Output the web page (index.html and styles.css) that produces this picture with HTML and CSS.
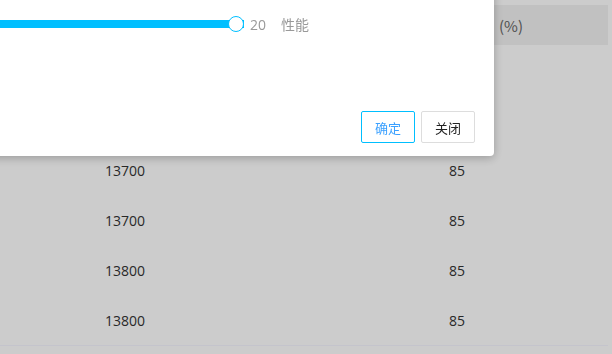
FILE: index.html
```html
<!DOCTYPE html>
<html lang="zh-CN">
<head>
    <meta charset="UTF-8">
    <meta name="viewport" content="width=device-width, initial-scale=1.0">
    <title>性能设置</title>
    <link rel="stylesheet" href="styles.css">
</head>
<body>
    <div class="table-wrap">
        <div class="table">
            <div class="row head">
                <div class="cell">设定值</div>
                <div class="cell pct">性能释放比例<span class="unit">(%)</span></div>
            </div>
            <div class="row"><div class="cell"></div><div class="cell pct"></div></div>
            <div class="row"><div class="cell"></div><div class="cell pct"></div></div>
            <div class="row"><div class="cell">13700</div><div class="cell pct">85</div></div>
            <div class="row"><div class="cell">13700</div><div class="cell pct">85</div></div>
            <div class="row"><div class="cell">13800</div><div class="cell pct">85</div></div>
            <div class="row"><div class="cell">13800</div><div class="cell pct">85</div></div>
        </div>
    </div>

    <!-- dark mask over the page -->
    <div class="mask"></div>

    <div class="dialog">
        <div class="slider-line">
            <div class="slider">
                <div class="track"></div>
                <div class="thumb"></div>
            </div>
            <span class="value">20</span>
            <span class="label">性能</span>
        </div>
        <div class="footer">
            <button class="btn btn-ok">确定</button>
            <button class="btn">关闭</button>
        </div>
    </div>
</body>
</html>
```

FILE: styles.css
```css
body {
    margin: 0;
    background-color: #ffffff;
    font-family: "Open Sans", "Noto Sans CJK SC", sans-serif;
    font-size: 14px;
    color: #333;
    overflow: hidden;
}

.table-wrap {
    padding-top: 5px;
}

.table {
    width: 608px;
    border-bottom: 1px solid #f6f6ff;
}

.row {
    display: grid;
    grid-template-columns: 250px 358px;
    height: 50px;
    align-items: center;
}

.row.head {
    height: 40px;
    background-color: #f2f2f2;
    color: #666;
    font-family: "Noto Sans CJK SC", sans-serif;
    font-size: 15px;
}

.cell {
    text-align: center;
}

.cell.pct {
    padding-left: 56px;
}

.unit {
    margin-left: 18px;
}

.mask {
    position: fixed;
    inset: 0;
    background-color: rgba(0, 0, 0, 0.2);
}

.dialog {
    position: fixed;
    left: -306px;
    top: -100px;
    width: 800px;
    height: 256px;
    background-color: #fff;
    border-radius: 4px;
    box-shadow: 0 2px 10px rgba(0, 0, 0, 0.25);
    display: flex;
    flex-direction: column;
    justify-content: space-between;
    box-sizing: border-box;
    padding: 116px 19px 13px 0;
}

.slider-line {
    display: flex;
    align-items: center;
    height: 16px;
}

.slider {
    position: relative;
    width: 550px;
    height: 16px;
    display: flex;
    align-items: center;
}

.track {
    width: 100%;
    height: 8px;
    background-color: #00bfff;
}

.thumb {
    position: absolute;
    right: 0;
    top: 0;
    width: 14px;
    height: 14px;
    border: 1px solid #00bfff;
    border-radius: 50%;
    background-color: #fff;
}

.value {
    margin-left: 6px;
    color: #999;
}

.label {
    margin-left: 15px;
    color: #999;
}

.footer {
    display: flex;
    justify-content: flex-end;
    gap: 6px;
}

.btn {
    width: 54px;
    height: 32px;
    border: 1px solid #ddd;
    border-radius: 2px;
    background-color: #fff;
    font-family: "Noto Sans CJK SC", sans-serif;
    font-size: 13px;
    color: #222;
    cursor: pointer;
    padding: 0;
}

.btn-ok {
    border-color: #00bfff;
    color: #3aa0ff;
}
```
